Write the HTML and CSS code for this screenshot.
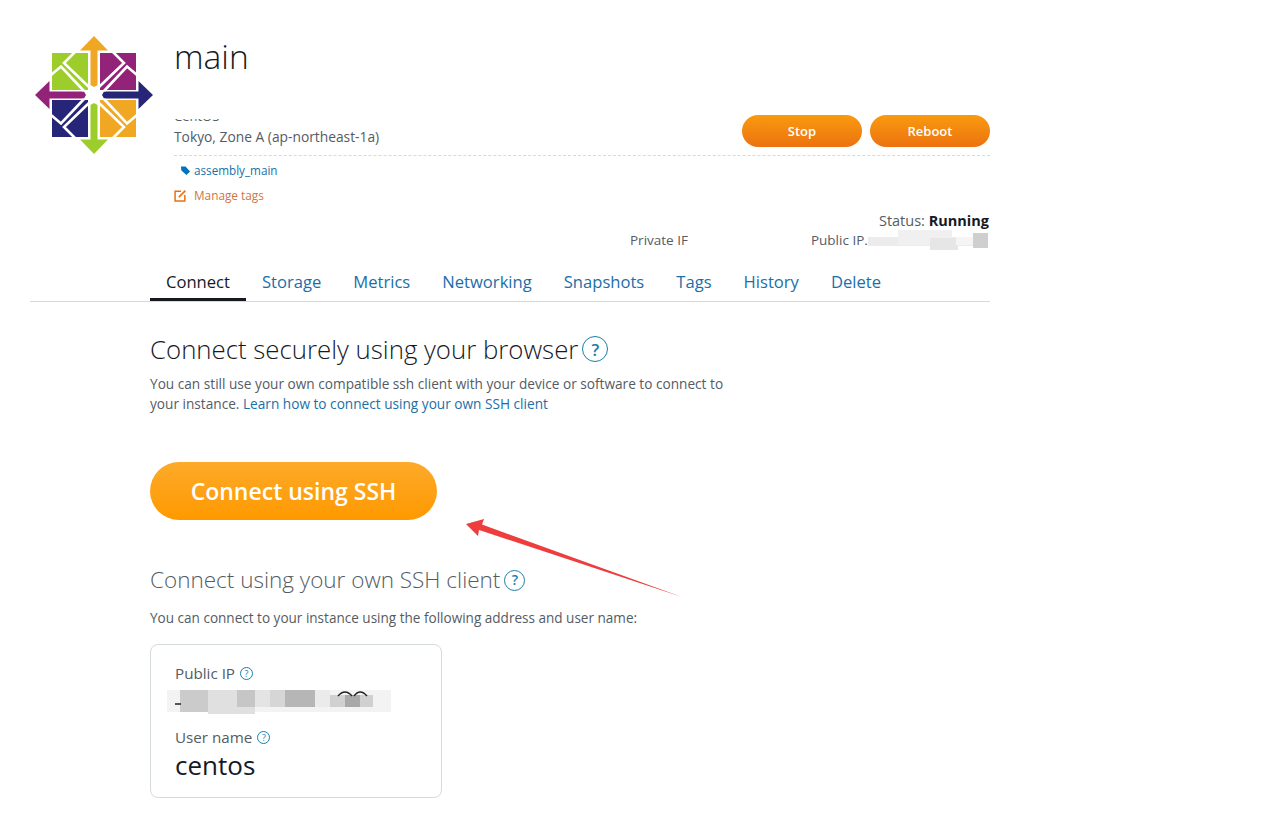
FILE: index.html
```html
<!DOCTYPE html>
<html lang="en">
<head>
<meta charset="utf-8">
<title>main</title>
<link rel="stylesheet" href="styles.css">
</head>
<body>
<div class="page">
  <header class="head">
    <svg class="logo" viewBox="-60 -60 120 120" aria-hidden="true">
      <defs>
        <path id="petal" d="M0 -59 L14 -44.500 H3.500 V-10 L0 -8 L-3.500 -10 V-44.500 H-14 Z"/>
        <g id="quad">
          <path d="M-42 -42 H-6 V-5 H-42 Z"/>
          <path class="cuts" d="M-19 -43 L-30 -32 L-5 -8 M-43 -20 L-33 -28.500 L-10 -4"/>
        </g>
      </defs>
      <use href="#petal" fill="#efa724"/>
      <use href="#petal" fill="#262577" transform="rotate(90)"/>
      <use href="#petal" fill="#9ccd2a" transform="rotate(180)"/>
      <use href="#petal" fill="#932279" transform="rotate(270)"/>
      <use href="#quad" fill="#9ccd2a"/>
      <use href="#quad" fill="#932279" transform="scale(-1 1)"/>
      <use href="#quad" fill="#efa724" transform="scale(-1 -1)"/>
      <use href="#quad" fill="#262577" transform="scale(1 -1)"/>
    </svg>
    <div class="summary">
      <h1 class="name">main</h1>
      <div class="plan-row">
        <div class="plan-text">
          <div class="cut"><span>CentOS</span></div>
          <div class="zone">Tokyo, Zone A (ap-northeast-1a)</div>
        </div>
        <div class="actions">
          <button class="btn">Stop</button>
          <button class="btn">Reboot</button>
        </div>
      </div>
      <a class="tag">
        <svg class="tag-icon" viewBox="0 0 12 12" aria-hidden="true"><path d="M1 1.500 H6 L11 7 L7 11 L1.500 6 Z"/></svg>
        assembly_main
      </a>
      <a class="manage">
        <svg class="edit-icon" viewBox="0 0 12 12" aria-hidden="true"><path d="M6.500 2 H1 V11 H10 V5.500"/><path d="M4.500 7.500 L10.500 1.500"/></svg>
        Manage tags
      </a>
      <div class="status"><span>Status:</span> <b>Running</b></div>
      <div class="ips">
        <span class="private">Private IF</span>
        <span class="public">Public IP.</span>
        <svg class="mosaic-a" viewBox="0 0 120 20" aria-hidden="true">
          <rect x="0" y="7" width="120" height="9" fill="#ececec"/>
          <rect x="30" y="0" width="54" height="15" fill="#f0f0f0"/>
          <rect x="62" y="8" width="28" height="12" fill="#e6e6e6"/>
          <rect x="88" y="7" width="18" height="8" fill="#f5f5f5"/>
          <rect x="105" y="3" width="15" height="15" fill="#cfcfcf"/>
        </svg>
      </div>
    </div>
  </header>

  <nav class="tabs">
    <a class="tab active">Connect</a>
    <a class="tab">Storage</a>
    <a class="tab">Metrics</a>
    <a class="tab">Networking</a>
    <a class="tab">Snapshots</a>
    <a class="tab">Tags</a>
    <a class="tab">History</a>
    <a class="tab">Delete</a>
  </nav>

  <main class="body">
    <h2 class="title">Connect securely using your browser<span class="help help-lg">?</span></h2>
    <p class="lead">You can still use your own compatible ssh client with your device or software to connect to your instance. <a class="link">Learn how to connect using your own SSH client</a></p>
    <button class="ssh">Connect using SSH</button>
    <h3 class="sub">Connect using your own SSH client<span class="help help-md">?</span></h3>
    <p class="note">You can connect to your instance using the following address and user name:</p>
    <section class="card">
      <div class="label">Public IP<span class="help help-sm">?</span></div>
      <svg class="mosaic-b" viewBox="0 0 226 33" aria-hidden="true">
        <rect x="2" y="7" width="224" height="22" fill="#f3f3f3"/>
        <rect x="15" y="7" width="28" height="22" fill="#cbcbcb"/>
        <rect x="43" y="7" width="47" height="24" fill="#e0e0e0"/>
        <rect x="72" y="7" width="18" height="17" fill="#c6c6c6"/>
        <rect x="90" y="7" width="15" height="17" fill="#e4e4e4"/>
        <rect x="105" y="7" width="15" height="17" fill="#d6d6d6"/>
        <rect x="120" y="7" width="30" height="17" fill="#b6b6b6"/>
        <rect x="150" y="7" width="15" height="17" fill="#ebebeb"/>
        <rect x="165" y="12" width="43" height="12" fill="#d0d0d0"/>
        <rect x="180" y="12" width="15" height="12" fill="#a9a9a9"/>
        <path class="peek" d="M173 13 Q180 5 187 13 M189 13 Q195 5 202 13 M10 21 H16"/>
      </svg>
      <div class="label user-label">User name<span class="help help-sm">?</span></div>
      <div class="user">centos</div>
    </section>
  </main>
</div>
<svg class="arrow" viewBox="0 0 224 84" aria-hidden="true"><path d="M2 10 L20 5 L18 10.500 L218 83 L15 16 L14 22 Z"/></svg>
</body>
</html>
```
FILE: styles.css
```css
* { box-sizing: border-box; }
html, body { margin: 0; height: 100%; background: #fff; }
body { font-family: "Open Sans", sans-serif; color: #545b64; position: relative; overflow: hidden; }
.page { width: 990px; padding: 35px 0 0 30px; }
.head { display: flex; gap: 20px; padding-left: 4px; }
.logo { width: 120px; height: 120px; flex: none; }
.cuts { fill: none; stroke: #fff; stroke-width: 2.600; }
.summary { flex: 1; padding-top: 1px; }
.name { margin: 0; font-size: 33.500px; font-weight: 300; line-height: 40px; color: #16191f; }
.plan-row { display: flex; justify-content: space-between; align-items: flex-end; margin-top: 39px; padding-bottom: 8px; border-bottom: 1px dashed #d5dbdb; }
.cut { height: 4px; overflow: hidden; font-size: 13px; }
.cut span { display: block; margin-top: -8px; line-height: 10px; }
.zone { font-size: 13.800px; line-height: 20px; margin-top: 4px; }
.actions { display: flex; gap: 8px; }
.btn { width: 120px; height: 32px; border: 0; border-radius: 16px; color: #fff; font: 600 13px "Open Sans", sans-serif; background: linear-gradient(#fa9a0e, #ec7211); }
.tag { display: flex; align-items: center; gap: 3px; margin: 6px 0 0 6px; font-size: 11.700px; line-height: 16px; color: #1a6fa8; }
.tag-icon { width: 11px; height: 11px; fill: #0073bb; }
.manage { display: flex; align-items: center; gap: 7px; margin-top: 9px; font-size: 11.800px; line-height: 16px; color: #cf7446; }
.edit-icon { width: 13px; height: 13px; fill: none; stroke: #ec7211; stroke-width: 1.400; }
.status { text-align: right; margin-top: 9px; padding-right: 1px; font-size: 14.500px; line-height: 18px; }
.status b { color: #16191f; }
.ips { display: flex; align-items: center; font-size: 13.500px; height: 20px; white-space: nowrap; }
.private { margin-left: 456px; }
.public { margin-left: 123px; flex: none; width: 57px; }
.mosaic-a { width: 120px; height: 20px; flex: none; }
.tabs { display: flex; gap: 32px; margin-top: 10px; padding-left: 120px; border-bottom: 1px solid #d5dbdb; height: 42px; font-size: 16.600px; line-height: 24px; }
.tab { color: #1a6fa8; padding-top: 10px; height: 41px; }
.tab.active { color: #16191f; border-bottom: 3px solid #16191f; padding-left: 16px; padding-right: 16px; margin-right: -16px; }
.body { padding-left: 120px; }
.title { display: flex; align-items: center; margin: 27px 0 0; font-size: 25.800px; font-weight: 300; line-height: 40px; color: #16191f; }
.help { display: inline-flex; align-items: center; justify-content: center; flex: none; border: 1.500px solid #1b7ea8; border-radius: 50%; color: #1b7ea8; font-weight: 600; }
.help-lg { width: 26px; height: 26px; margin-left: 4px; font-size: 17px; line-height: 1; }
.help-md { width: 21px; height: 21px; margin-left: 4px; font-size: 14px; line-height: 1; }
.help-sm { width: 13px; height: 13px; margin-left: 5px; border-width: 1px; font-size: 9px; font-weight: 400; line-height: 1; }
.lead { width: 590px; margin: 5px 0 0; font-size: 13.650px; line-height: 20px; }
.link { color: #1a6fa8; }
.ssh { display: block; width: 287px; height: 58px; margin-top: 48px; border: 0; border-radius: 29px; background: linear-gradient(#fdaa2a, #ff9900); color: #fff; font: 600 23px "Open Sans", sans-serif; }
.sub { display: flex; align-items: center; margin: 40px 0 0; font-size: 22.500px; font-weight: 300; line-height: 40px; color: #545b64; }
.note { margin: 8px 0 0; font-size: 13.550px; line-height: 20px; }
.card { width: 292px; height: 154px; margin-top: 16px; padding: 18px 24px; border: 1px solid #d5dbdb; border-radius: 8px; }
.label { display: flex; align-items: center; font-size: 15.200px; line-height: 20px; }
.mosaic-b { display: block; width: 226px; height: 33px; margin-left: -10px; }
.peek { fill: none; stroke: #222; stroke-width: 1.500; }
.user-label { margin-top: 11px; }
.user { font-size: 26px; line-height: 36px; color: #16191f; }
.arrow { position: absolute; left: 464px; top: 514px; width: 224px; height: 84px; fill: #ee3d3d; }
```
